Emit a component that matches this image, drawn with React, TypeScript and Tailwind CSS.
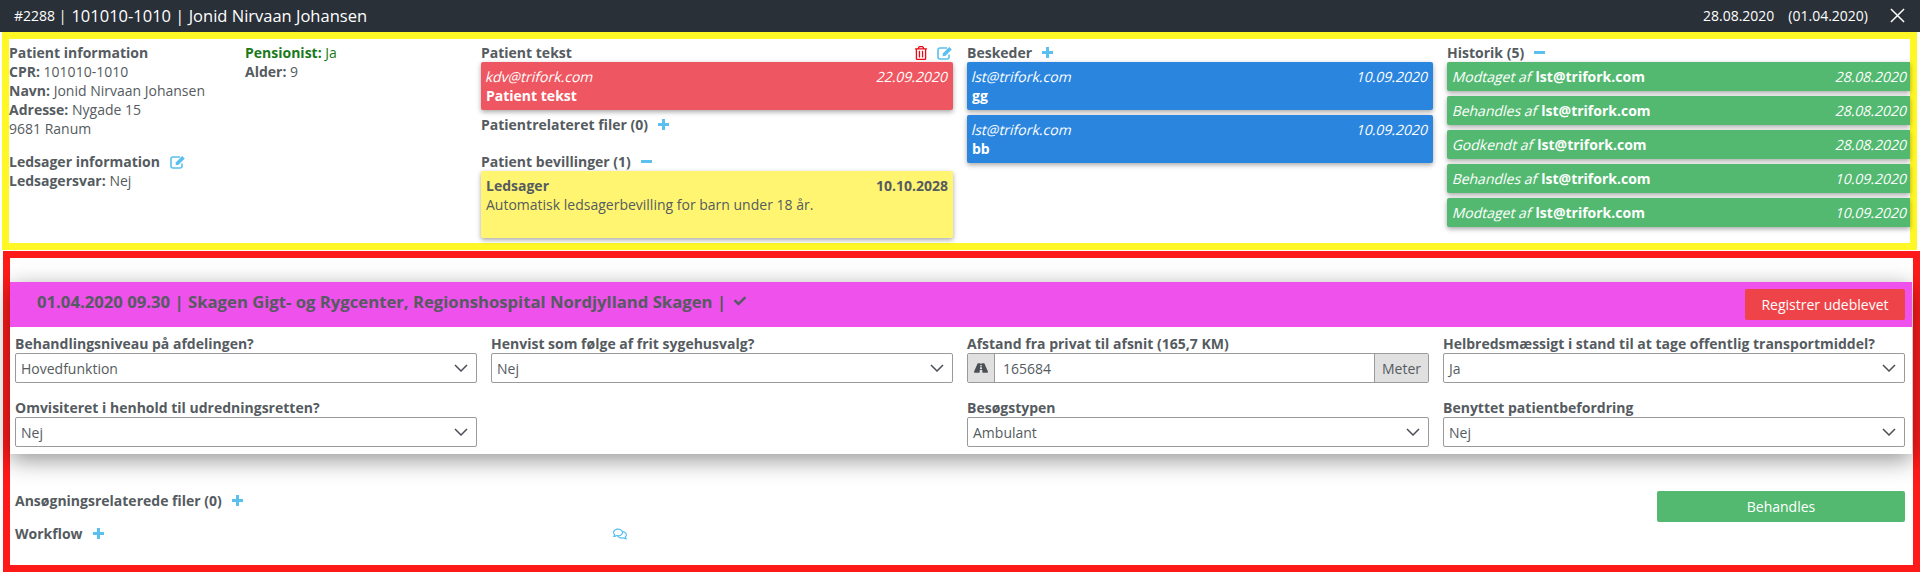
import React from 'react'
import { FaCheck, FaRegComments, FaRegTrashAlt, FaRoad } from 'react-icons/fa'

function Chevron() {
  return (
    <svg viewBox="0 0 14 8" className="w-[14px] h-[8px] shrink-0" fill="none" stroke="#4a5056" strokeWidth="1.5">
      <path d="M1 1l6 6 6-6" />
    </svg>
  )
}

function Plus() {
  return (
    <svg viewBox="0 0 11 11" className="w-[11px] h-[11px] ml-[10px] fill-[#5bc0ee]">
      <path d="M4 0h3v4h4v3H7v4H4V7H0V4h4z" />
    </svg>
  )
}

function Minus() {
  return (
    <svg viewBox="0 0 11 3" className="w-[11px] h-[3px] ml-[10px] fill-[#5bc0ee]">
      <path d="M0 0h11v3H0z" />
    </svg>
  )
}

function EditIcon({ className = '' }: { className?: string }) {
  return (
    <svg viewBox="0 0 16 14" className={`w-[16px] h-[14px] ${className}`}>
      <path
        d="M12 8.5V11a2 2 0 0 1-2 2H3a2 2 0 0 1-2-2V4a2 2 0 0 1 2-2h7"
        fill="none"
        stroke="#5bc0ee"
        strokeWidth="1.6"
      />
      <path d="M6 7.2L12.2 1l2.6 2.6L8.6 9.8 5.6 10.3z" fill="#5bc0ee" />
    </svg>
  )
}

// the original's italics are a slanted upright face, not a true italic
function Slanted({ children }: { children: React.ReactNode }) {
  return <span className="inline-block skew-x-[-14deg] whitespace-pre">{children}</span>
}

function Heading({ children, className = '' }: { children: React.ReactNode; className?: string }) {
  return <div className={`flex items-center h-[19px] font-bold ${className}`}>{children}</div>
}

function Field({ label, value }: { label: string; value: string }) {
  return (
    <div>
      <b>{label}:</b> {value}
    </div>
  )
}

function MessageCard({ color, from, date, text }: { color: string; from: string; date: string; text: string }) {
  return (
    <div className={`${color} text-white rounded-[2px] shadow-[0_2px_5px_rgba(0,0,0,0.35)] px-[5px] py-[5px] h-[48px]`}>
      <div className="flex justify-between">
        <Slanted>{from}</Slanted>
        <Slanted>{date}</Slanted>
      </div>
      <div className="font-bold">{text}</div>
    </div>
  )
}

function HistoryRow({ action, date }: { action: string; date: string }) {
  return (
    <div className="bg-[#53b970] text-white flex justify-between items-center h-[29px] pl-[6px] pr-[3px] rounded-l-[2px] shadow-[0_2px_5px_rgba(0,0,0,0.35)]">
      <span>
        <Slanted>{action} af </Slanted>
        <b>lst@trifork.com</b>
      </span>
      <Slanted>{date}</Slanted>
    </div>
  )
}

function SelectField({ label, value }: { label: string; value: string }) {
  return (
    <div>
      <div className="font-bold h-[19px] leading-[19px]">{label}</div>
      <div className="h-[30px] border border-[#9a9a9a] rounded-[2px] bg-white flex items-center justify-between pl-[5px] pr-[8px]">
        <span>{value}</span>
        <Chevron />
      </div>
    </div>
  )
}

export default function App() {
  const history = [
    ['Modtaget', '28.08.2020'],
    ['Behandles', '28.08.2020'],
    ['Godkendt', '28.08.2020'],
    ['Behandles', '10.09.2020'],
    ['Modtaget', '10.09.2020'],
  ]

  return (
    <div className="h-[572px] overflow-hidden bg-white text-[14px] leading-[19px] text-[#555b60] font-['Open_Sans',sans-serif]">
      {/* Header */}
      <header className="h-[32px] bg-[#2a3038] text-white flex items-center justify-between pl-[14px] pr-[15px] pb-[2px]">
        <div className="flex items-center">
          <span className="text-[14px] mr-[5px]">#2288 |</span>
          <span className="text-[16.5px]">101010-1010 | Jonid Nirvaan Johansen</span>
        </div>
        <div className="flex items-center">
          <span>28.08.2020</span>
          <span className="ml-[14px]">(01.04.2020)</span>
          <svg viewBox="0 0 16 16" className="w-[15px] h-[15px] ml-[22px]" fill="none" stroke="white" strokeWidth="1.6">
            <path d="M1 1l14 14M15 1L1 15" />
          </svg>
        </div>
      </header>

      {/* Patient overview */}
      <section className="ml-[2px] mr-[3px] h-[218px] border-[7px] border-[#fff826] flex pt-[4px]">
        <div className="w-[472px] shrink-0 grid grid-cols-2 content-start">
          <div>
            <div className="font-bold">Patient information</div>
            <Field label="CPR" value="101010-1010" />
            <Field label="Navn" value="Jonid Nirvaan Johansen" />
            <Field label="Adresse" value="Nygade 15" />
            <div>9681 Ranum</div>
            <Heading className="mt-[14px]">
              Ledsager information
              <EditIcon className="ml-[10px]" />
            </Heading>
            <Field label="Ledsagersvar" value="Nej" />
          </div>
          <div>
            <div className="text-[#1a7a1a]">
              <b>Pensionist:</b> Ja
            </div>
            <Field label="Alder" value="9" />
          </div>
        </div>

        <div className="w-[472px] shrink-0">
          <Heading className="justify-between">
            Patient tekst
            <span className="flex items-center">
              <FaRegTrashAlt className="text-[#ee0a14] text-[14px] mr-[9px]" />
              <EditIcon />
            </span>
          </Heading>
          <MessageCard color="bg-[#ee5761]" from="kdv@trifork.com" date="22.09.2020" text="Patient tekst" />
          <Heading className="mt-[5px]">
            Patientrelateret filer (0)
            <Plus />
          </Heading>
          <Heading className="mt-[18px]">
            Patient bevillinger (1)
            <Minus />
          </Heading>
          <div className="bg-[#fff570] h-[67px] rounded-[2px] shadow-[0_2px_5px_rgba(0,0,0,0.35)] px-[5px] py-[5px]">
            <div className="flex justify-between font-bold">
              <span>Ledsager</span>
              <span>10.10.2028</span>
            </div>
            <div>Automatisk ledsagerbevilling for barn under 18 år.</div>
          </div>
        </div>

        <div className="w-[466px] shrink-0 ml-[14px]">
          <Heading>
            Beskeder
            <Plus />
          </Heading>
          <div className="flex flex-col gap-[5px]">
            <MessageCard color="bg-[#2a85df]" from="lst@trifork.com" date="10.09.2020" text="gg" />
            <MessageCard color="bg-[#2a85df]" from="lst@trifork.com" date="10.09.2020" text="bb" />
          </div>
        </div>

        <div className="flex-1 ml-[14px]">
          <Heading>
            Historik (5)
            <Minus />
          </Heading>
          <div className="flex flex-col gap-[5px]">
            {history.map(([action, date], i) => (
              <HistoryRow key={i} action={action} date={date} />
            ))}
          </div>
        </div>
      </section>

      {/* Appointment */}
      <section className="mt-[1px] ml-[3px] h-[321px] border-[7px] border-[#ff1a1a] pt-[24px]">
        <div className="mr-[1px] shadow-[0_6px_22px_rgba(0,0,0,0.42)] pb-[7px]">
          <div className="h-[45px] bg-[#ee51ec] flex items-start justify-between pl-[27px] pr-[7px]">
            <div className="flex items-center h-[38px] text-[16.7px] font-bold">
              01.04.2020 09.30 | Skagen Gigt- og Rygcenter, Regionshospital Nordjylland Skagen |
              <FaCheck className="text-[12px] ml-[8px]" />
            </div>
            <button className="mt-[7px] w-[160px] h-[31px] rounded-[2px] bg-[#ee4449] text-white">
              Registrer udeblevet
            </button>
          </div>
          <div className="grid grid-cols-4 gap-x-[14px] gap-y-[15px] pl-[5px] pr-[7px] pt-[7px]">
            <SelectField label="Behandlingsniveau på afdelingen?" value="Hovedfunktion" />
            <SelectField label="Henvist som følge af frit sygehusvalg?" value="Nej" />
            <div>
              <div className="font-bold h-[19px] leading-[19px]">Afstand fra privat til afsnit (165,7 KM)</div>
              <div className="h-[30px] border border-[#9a9a9a] rounded-[2px] bg-white flex items-stretch">
                <div className="w-[27px] bg-[#e0e0e0] border-r border-[#9a9a9a] flex items-center justify-center">
                  <FaRoad className="text-[14px] text-[#4a5056]" />
                </div>
                <div className="flex-1 flex items-center pl-[8px]">165684</div>
                <div className="w-[54px] bg-[#e0e0e0] border-l border-[#9a9a9a] flex items-center justify-center">
                  Meter
                </div>
              </div>
            </div>
            <SelectField label="Helbredsmæssigt i stand til at tage offentlig transportmiddel?" value="Ja" />
            <SelectField label="Omvisiteret i henhold til udredningsretten?" value="Nej" />
            <div />
            <SelectField label="Besøgstypen" value="Ambulant" />
            <SelectField label="Benyttet patientbefordring" value="Nej" />
          </div>
        </div>

        <div className="flex justify-between pl-[5px] pr-[8px] pt-[37px]">
          <div className="w-[612px]">
            <Heading>
              Ansøgningsrelaterede filer (0)
              <Plus />
            </Heading>
            <div className="flex items-center justify-between h-[19px] mt-[14px]">
              <Heading>
                Workflow
                <Plus />
              </Heading>
              <FaRegComments className="text-[#5bc0ee] text-[14px]" />
            </div>
          </div>
          <button className="w-[248px] h-[31px] rounded-[2px] bg-[#53b970] text-white">Behandles</button>
        </div>
      </section>
    </div>
  )
}
